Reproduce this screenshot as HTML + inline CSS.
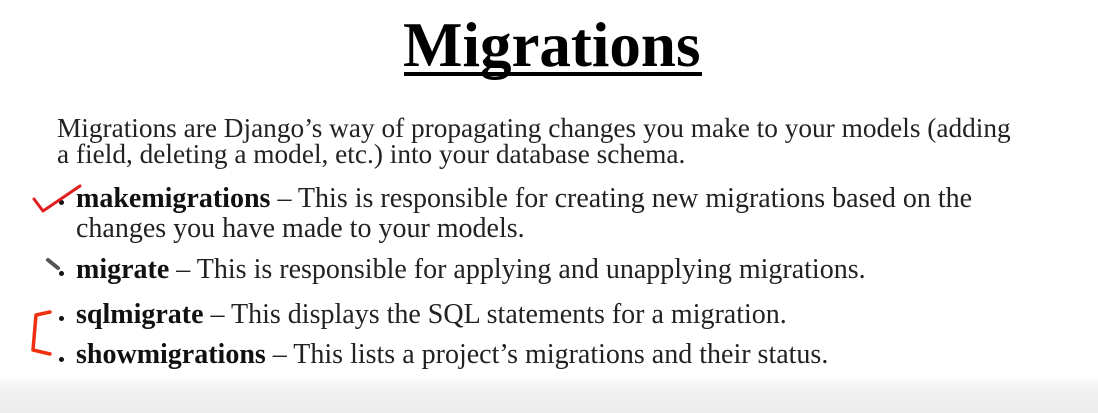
<!DOCTYPE html>
<html><head><style>
html,body{margin:0;padding:0;}
body{width:1098px;height:413px;overflow:hidden;position:relative;background:linear-gradient(to bottom,#fff 0,#fff 375px,#f2f2f2 390px,#ececec 413px);font-family:"Liberation Serif",serif;color:#222;}
.t{position:absolute;white-space:nowrap;font-size:28px;line-height:1;}
.i{font-size:27.3px;}
b{color:#111;}
h1{position:absolute;left:403px;top:14px;margin:0;font-size:63px;font-weight:bold;line-height:1;color:#000;white-space:nowrap;}
.ul{position:absolute;left:404px;top:72px;width:298px;height:4px;background:#000;}
.dot{position:absolute;width:5px;height:5px;border-radius:50%;background:#111;}
</style></head><body>
<h1>Migrations</h1>
<div class="ul"></div>
<div class="t i" style="left:57px;top:115px">Migrations are Django’s way of propagating changes you make to your models (adding</div>
<div class="t i" style="left:57px;top:141px">a field, deleting a model, etc.) into your database schema.</div>
<div class="dot" style="left:59px;top:200px"></div>
<div class="t" style="left:76px;top:185px"><b>makemigrations</b> – This is responsible for creating new migrations based on the</div>
<div class="t" style="left:76px;top:215px">changes you have made to your models.</div>
<div class="dot" style="left:59px;top:271px"></div>
<div class="t" style="left:76px;top:256px"><b>migrate</b> – This is responsible for applying and unapplying migrations.</div>
<div class="dot" style="left:59px;top:316px"></div>
<div class="t" style="left:76px;top:301px"><b>sqlmigrate</b> – This displays the SQL statements for a migration.</div>
<div class="dot" style="left:59px;top:357px"></div>
<div class="t" style="left:76px;top:341px"><b>showmigrations</b> – This lists a project’s migrations and their status.</div>
<svg width="1098" height="413" style="position:absolute;left:0;top:0" fill="none">
<path d="M34 199 L43 211 L80 186" stroke="#e02020" stroke-width="3" stroke-linecap="round" stroke-linejoin="round"/>
<path d="M48 260 L58 268" stroke="#555" stroke-width="4" stroke-linecap="round"/>
<path d="M50 312 L36 315 L33 350 L50 354" stroke="#f03010" stroke-width="3.5" stroke-linecap="round" stroke-linejoin="round"/>
</svg>
</body></html>
